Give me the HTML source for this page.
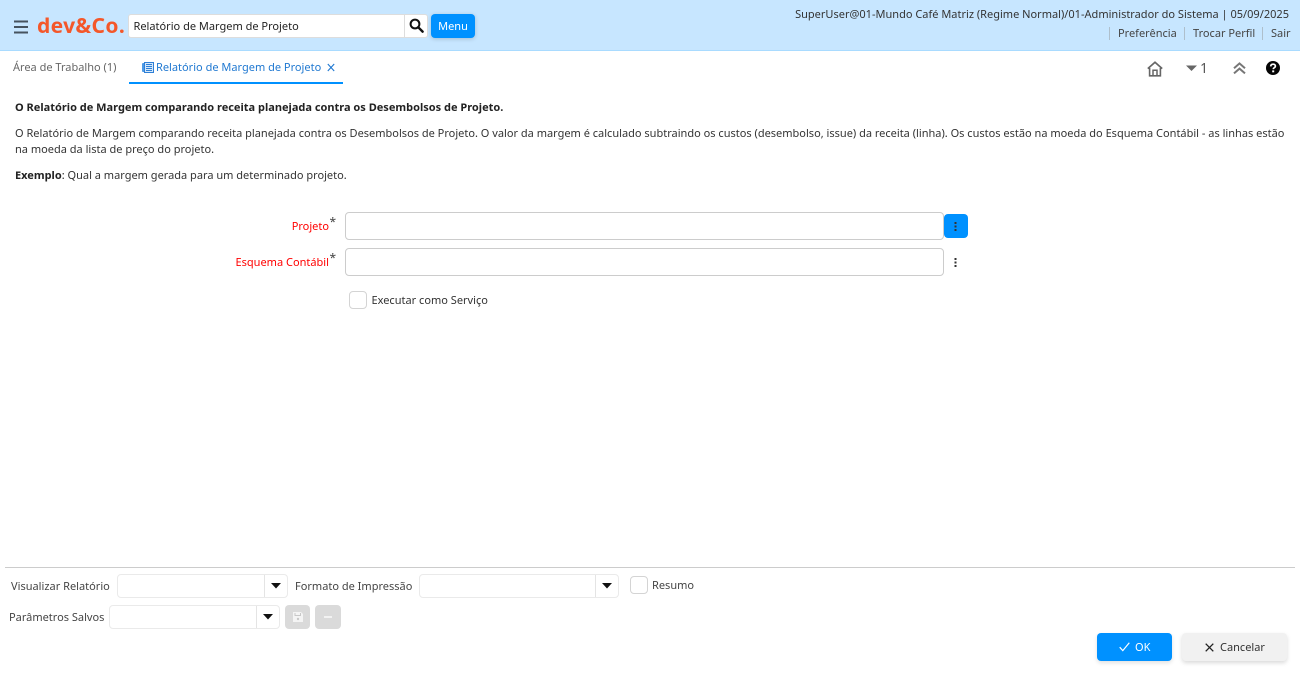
<!DOCTYPE html>
<html lang="pt">
<head>
<meta charset="utf-8">
<title>Relatório de Margem de Projeto</title>
<style>
html,body{margin:0;padding:0;width:1300px;height:674px;overflow:hidden;background:#fff}
body{position:relative;font-family:"Noto Sans","DejaVu Sans","Liberation Sans",sans-serif;font-size:11px;color:#333}
.a{position:absolute;white-space:nowrap}
.box{position:absolute;box-sizing:border-box;background:#fff}
svg{position:absolute;display:block}
.lbl{line-height:16px}
</style>
</head>
<body>
<div class="a" style="left:0;top:0;width:1300px;height:51px;background:#c7e6ff;border-bottom:1px solid #a9dbff;box-sizing:border-box"></div>
<svg style="left:14px;top:20px" width="14" height="14" viewBox="0 0 14 14"><path d="M0 1.5H14M0 7H14M0 12.5H14" stroke="#46535f" stroke-width="1.9" fill="none"/></svg>
<div class="a" style="left:37px;top:12px;font-size:21px;font-weight:700;line-height:28px;color:#f4572a;letter-spacing:0.35px">dev&amp;Co.</div>
<div class="box" style="left:128px;top:14px;width:300px;height:24px;border:1px solid #ddd;border-radius:3px"></div>
<div class="a" style="left:404px;top:15px;width:1px;height:22px;background:#ddd"></div>
<div class="a lbl" style="left:133.5px;top:19px;color:#222">Relatório de Margem de Projeto</div>
<svg style="left:409px;top:18px" width="15" height="15" viewBox="0 0 15 15"><circle cx="6" cy="6" r="4.4" fill="none" stroke="#111" stroke-width="2"/><path d="M9.3 9.3L13.6 13.6" stroke="#111" stroke-width="2.4" stroke-linecap="round"/></svg>
<div class="a" style="left:431px;top:14px;width:44px;height:24px;background:#0091ff;border-radius:4px;color:#fff;text-align:center;line-height:25px;box-shadow:0 1px 4px rgba(0,0,0,.18)">Menu</div>

<div class="a lbl" style="right:11px;top:7px;color:#333">SuperUser@01-Mundo Café Matriz (Regime Normal)/01-Administrador do Sistema | 05/09/2025</div>
<div class="a" style="left:1109px;top:27px;width:1px;height:13px;background:#aebfcc"></div>
<div class="a lbl" style="left:1118px;top:26px;color:#444">Preferência</div>
<div class="a" style="left:1184px;top:27px;width:1px;height:13px;background:#aebfcc"></div>
<div class="a lbl" style="left:1193px;top:26px;color:#444">Trocar Perfil</div>
<div class="a" style="left:1262px;top:27px;width:1px;height:13px;background:#aebfcc"></div>
<div class="a lbl" style="left:1271px;top:26px;color:#444">Sair</div>

<div class="a lbl" style="left:13px;top:60px;color:#666">Área de Trabalho (1)</div>
<svg style="left:142px;top:62px" width="12" height="11" viewBox="0 0 12 11"><rect x="0" y="1" width="4" height="9" rx="1" fill="#4f9be6"/><rect x="2.5" y="0.5" width="9" height="10" fill="#d5e8fa" stroke="#2f7fd6"/><path d="M4 2.5H10M4 4.5H10M4 6.5H10M4 8.5H10" stroke="#2f7fd6" stroke-width="1"/></svg>
<div class="a lbl" style="left:156px;top:60px;color:#1f78d1">Relatório de Margem de Projeto</div>
<svg style="left:327px;top:63px" width="8" height="9" viewBox="0 0 8 9"><path d="M.8 1L7.2 8M7.2 1L.8 8" stroke="#1f78d1" stroke-width="1.1" fill="none"/></svg>
<div class="a" style="left:129px;top:82px;width:214px;height:2px;background:#0091ff"></div>

<svg style="left:1147px;top:61px" width="16" height="16" viewBox="0 0 16 16"><path d="M.8 7.6L8 1.2L15.2 7.6" fill="none" stroke="#666" stroke-width="1.7"/><path d="M2.6 7V14.8H13.4V7" fill="none" stroke="#666" stroke-width="1.6"/><path d="M6 14.5V9.3H10V14.5" fill="none" stroke="#666" stroke-width="1.5"/></svg>
<svg style="left:1186px;top:65px" width="11" height="7" viewBox="0 0 11 7"><path d="M0 .5H11L5.5 6Z" fill="#666"/></svg>
<div class="a" style="left:1200px;top:60px;font-size:14px;line-height:18px;color:#555">1</div>
<svg style="left:1233px;top:62px" width="13" height="13" viewBox="0 0 13 13"><path d="M1 6.2L6.5 1.4L12 6.2M1 11.4L6.5 6.6L12 11.4" fill="none" stroke="#777" stroke-width="2"/></svg>
<svg style="left:1266px;top:61px" width="14" height="14" viewBox="0 0 14 14"><circle cx="7" cy="7" r="7" fill="#050505"/><path d="M4.7 5.4C4.8 3.9 5.8 3.2 7.1 3.2C8.5 3.2 9.4 4 9.4 5.1C9.4 6.6 7.4 6.6 7.2 8.2" fill="none" stroke="#fff" stroke-width="1.7"/><rect x="6.2" y="9.4" width="2" height="1.9" fill="#fff"/></svg>

<div class="a lbl" style="left:15px;top:100px;font-weight:700;color:#222">O Relatório de Margem comparando receita planejada contra os Desembolsos de Projeto.</div>
<div class="a lbl" style="left:15px;top:126px;color:#333">O Relatório de Margem comparando receita planejada contra os Desembolsos de Projeto. O valor da margem é calculado subtraindo os custos (desembolso, issue) da receita (linha). Os custos estão na moeda do Esquema Contábil - as linhas estão</div>
<div class="a lbl" style="left:15px;top:142px;color:#333">na moeda da lista de preço do projeto.</div>
<div class="a lbl" style="left:15px;top:168px;color:#333"><b style="color:#222">Exemplo</b>: Qual a margem gerada para um determinado projeto.</div>

<div class="a lbl" style="right:971px;top:219px;color:#f00">Projeto</div>
<div class="a" style="left:329.5px;top:214px;font-size:12px;line-height:16px;color:#444">*</div>
<div class="box" style="left:345px;top:212px;width:599px;height:28px;border:1px solid #ccc;border-radius:4px"></div>
<div class="a" style="left:944px;top:214px;width:24px;height:24px;background:#0091ff;border-radius:4px"></div>
<svg style="left:954px;top:222px" width="3" height="9" viewBox="0 0 3 9"><path d="M.5 0h2v2h-2zM.5 3.5h2v2h-2zM.5 7h2v2h-2z" fill="#333"/></svg>

<div class="a lbl" style="right:971px;top:255px;color:#f00">Esquema Contábil</div>
<div class="a" style="left:329.5px;top:250px;font-size:12px;line-height:16px;color:#444">*</div>
<div class="box" style="left:345px;top:248px;width:599px;height:28px;border:1px solid #ccc;border-radius:4px"></div>
<svg style="left:954px;top:258px" width="3" height="9" viewBox="0 0 3 9"><path d="M.5 0h2v2h-2zM.5 3.5h2v2h-2zM.5 7h2v2h-2z" fill="#333"/></svg>

<div class="box" style="left:349px;top:291px;width:18px;height:18px;border:1px solid #d4d4d4;border-radius:4px"></div>
<div class="a lbl" style="left:371.5px;top:293px;color:#333">Executar como Serviço</div>

<div class="a" style="left:5px;top:567px;width:1290px;height:1px;background:#ccc"></div>

<div class="a lbl" style="left:11px;top:579px;color:#444">Visualizar Relatório</div>
<div class="box" style="left:117px;top:574px;width:171px;height:24px;border:1px solid #eaeaea;border-radius:4px"></div>
<div class="a" style="left:264px;top:575px;width:1px;height:22px;background:#e4e4e4"></div>
<svg style="left:271px;top:583px" width="10" height="6" viewBox="0 0 10 6"><path d="M0 0H10L5 5.5Z" fill="#111"/></svg>

<div class="a lbl" style="left:295px;top:579px;color:#444">Formato de Impressão</div>
<div class="box" style="left:419px;top:574px;width:200px;height:24px;border:1px solid #eaeaea;border-radius:4px"></div>
<div class="a" style="left:595px;top:575px;width:1px;height:22px;background:#e4e4e4"></div>
<svg style="left:602px;top:583px" width="10" height="6" viewBox="0 0 10 6"><path d="M0 0H10L5 5.5Z" fill="#111"/></svg>

<div class="box" style="left:630px;top:576px;width:18px;height:18px;border:1px solid #d4d4d4;border-radius:4px"></div>
<div class="a lbl" style="left:652px;top:578px;color:#444">Resumo</div>

<div class="a lbl" style="left:9px;top:610px;color:#444">Parâmetros Salvos</div>
<div class="box" style="left:109px;top:605px;width:171px;height:24px;border:1px solid #eaeaea;border-radius:4px"></div>
<div class="a" style="left:256px;top:606px;width:1px;height:22px;background:#e4e4e4"></div>
<svg style="left:263px;top:614px" width="10" height="6" viewBox="0 0 10 6"><path d="M0 0H10L5 5.5Z" fill="#111"/></svg>

<div class="a" style="left:285px;top:605px;width:25px;height:24px;background:#dadada;border-radius:4px"></div>
<svg style="left:293px;top:612px" width="10" height="10" viewBox="0 0 10 10"><path d="M0 0H8L10 2V10H0Z" fill="#f4f4f4"/><path d="M2 1V3.5H7.5V1" fill="none" stroke="#c8c8c8" stroke-width="1"/><circle cx="5" cy="7" r="1.2" fill="#c8c8c8"/></svg>
<div class="a" style="left:315px;top:605px;width:26px;height:24px;background:#dadada;border-radius:4px"></div>
<div class="a" style="left:324px;top:616px;width:8px;height:2px;background:#f2f2f2"></div>

<div class="a" style="left:1097px;top:633px;width:75px;height:28px;background:#0091ff;border-radius:4px;box-shadow:0 2px 4px rgba(0,0,0,.12)"></div>
<svg style="left:1119px;top:642px" width="11" height="10" viewBox="0 0 11 10"><path d="M.7 5.2L3.8 8.6L10.3 .8" fill="none" stroke="#fff" stroke-width="1.2"/></svg>
<div class="a lbl" style="left:1135px;top:640px;color:#fff">OK</div>
<div class="a" style="left:1182px;top:633px;width:105px;height:28px;background:#f1f1f1;border-radius:4px;box-shadow:0 2px 4px rgba(0,0,0,.15)"></div>
<svg style="left:1204.5px;top:643px" width="9" height="9" viewBox="0 0 9 9"><path d="M.7.7L8.3 8.3M8.3.7L.7 8.3" stroke="#222" stroke-width="1.3" fill="none"/></svg>
<div class="a lbl" style="left:1220px;top:640px;color:#333">Cancelar</div>
</body>
</html>
